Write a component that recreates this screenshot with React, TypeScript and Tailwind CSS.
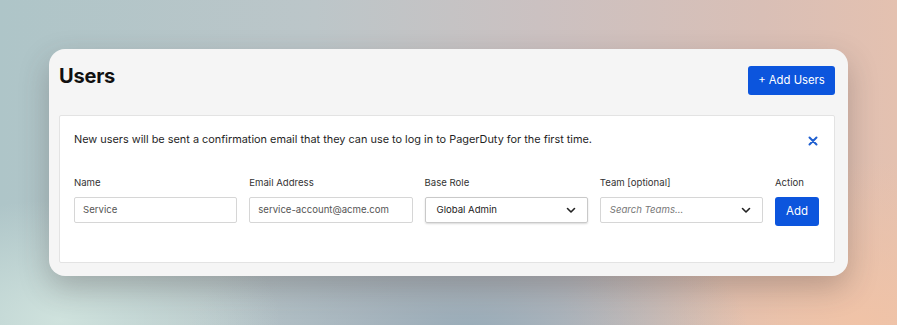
import React from "react";

function Chevron() {
  return (
    <svg width="12" height="12" viewBox="0 0 12 12" fill="none">
      <path d="M2.5 4.5L6 8L9.5 4.5" stroke="#222" strokeWidth="1.6" strokeLinecap="round" strokeLinejoin="round" />
    </svg>
  );
}

function Label({ children }: { children: React.ReactNode }) {
  return <label className="block text-[9.6px] text-[#333] leading-[10px] h-[10px] mb-[9px]">{children}</label>;
}

export default function App() {
  return (
    <div
      className="w-[897px] h-[325px] overflow-hidden relative bg-[radial-gradient(ellipse_220px_120px_at_60px_320px,#cfe2dd,transparent),radial-gradient(ellipse_280px_130px_at_470px_335px,#97abb8,transparent),radial-gradient(ellipse_300px_160px_at_860px_320px,#f0c3a7,transparent),linear-gradient(90deg,#aec5c8_0%,#bcc6c9_35%,#cbc1c1_60%,#d9bfb6_85%,#e4c1b0_100%)]"
      style={{ fontFamily: "Inter, 'Liberation Sans', sans-serif" }}
    >
      <div className="pt-[49px] pl-[49px]">
        <div className="w-[799px] h-[227px] bg-[#f5f5f5] rounded-[16px] shadow-[0_12px_30px_rgba(60,50,50,0.28)] pl-[10px] pr-[13px] pt-[17px] pb-[13px] flex flex-col">
          <div className="flex items-start justify-between h-[29px]">
            <h1 className="text-[20px] leading-[20px] font-bold text-[#111] mt-[0px] tracking-[-0.2px]">Users</h1>
            <button className="w-[87px] h-[29px] rounded-[3px] bg-[#0c55dd] text-white text-[11.3px] leading-none">
              + Add Users
            </button>
          </div>
          <div className="mt-[20px] flex-1 bg-white border border-[#e3e3e3] rounded-[2px] pl-[14px] pr-[15px] pt-[15px]">
            <div className="flex items-center justify-between h-[16px]">
              <p className="text-[10.9px] text-[#1f1f1f] leading-none">
                New users will be sent a confirmation email that they can use to log in to PagerDuty for the first time.
              </p>
              <svg width="10" height="10" viewBox="0 0 10 10" className="mr-[1px] mt-[3px]">
                <path d="M1.5 1.5L8.5 8.5M8.5 1.5L1.5 8.5" stroke="#1f5fd0" strokeWidth="2" strokeLinecap="round" />
              </svg>
            </div>
            <div className="mt-[31px] flex gap-[12px]">
              <div className="flex flex-col w-[164px]">
                <Label>Name</Label>
                <div className="h-[26px] border border-[#d6d6d6] rounded-[2px] flex items-center px-[8px] text-[9.6px] text-[#555]">
                  Service
                </div>
              </div>
              <div className="flex flex-col w-[164px]">
                <Label>Email Address</Label>
                <div className="h-[26px] border border-[#d6d6d6] rounded-[2px] flex items-center px-[8px] text-[9.6px] text-[#555]">
                  service-account@acme.com
                </div>
              </div>
              <div className="flex flex-col w-[164px]">
                <Label>Base Role</Label>
                <div className="h-[26px] border border-[#c9c9c9] rounded-[2px] flex items-center justify-between pl-[11px] pr-[10px] text-[9.6px] text-[#222] shadow-[0_1px_2px_rgba(0,0,0,0.15)]">
                  <span>Global Admin</span>
                  <Chevron />
                </div>
              </div>
              <div className="flex flex-col w-[164px]">
                <Label>Team [optional]</Label>
                <div className="h-[26px] border border-[#d6d6d6] rounded-[2px] flex items-center justify-between pl-[9px] pr-[10px] text-[9.6px]">
                  <span className="italic text-[#777]">Search Teams...</span>
                  <Chevron />
                </div>
              </div>
              <div className="flex flex-col">
                <Label>Action</Label>
                <button className="w-[44px] h-[29px] rounded-[3px] bg-[#0c55dd] text-white text-[11.5px] leading-none">
                  Add
                </button>
              </div>
            </div>
          </div>
        </div>
      </div>
    </div>
  );
}
